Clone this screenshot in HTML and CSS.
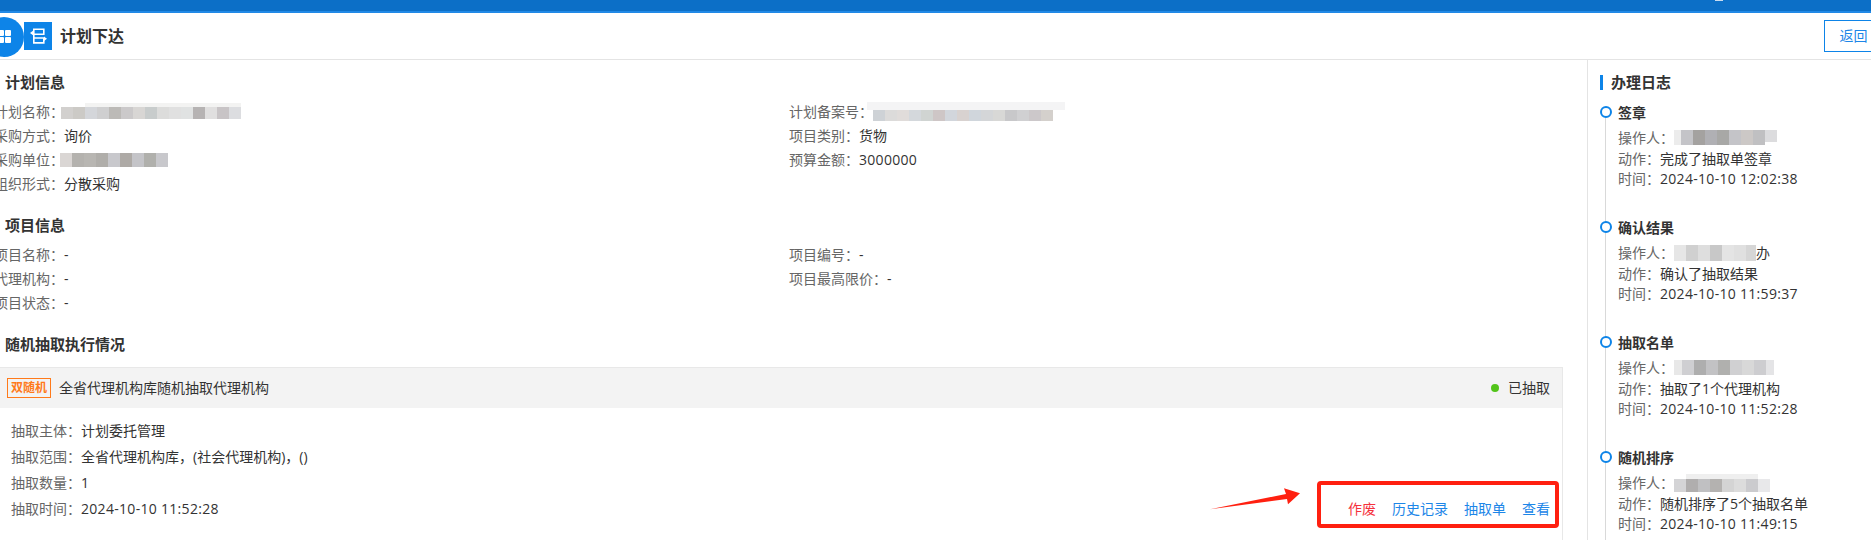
FILE: index.html
```html
<!DOCTYPE html>
<html lang="zh-CN">
<head>
<meta charset="utf-8">
<title>计划下达</title>
<link rel="stylesheet" href="styles.css">
</head>
<body>
<div class="topbar"><span class="top-dot"></span></div>
<header class="pagehead">
  <div class="head-left">
    <span class="apps"><i></i><i></i><i></i><i></i></span>
    <span class="doc-icon">
      <svg width="28" height="28" viewBox="0 0 28 28" fill="none" stroke="#fff" stroke-width="1.6">
        <path d="M9.8 7.3h10v4.9h-10zM9.8 16h10v4.9h-10zM9.8 12.2V16"/>
        <path d="M9 8.8 6 11l3 2.2zM20 14.5l3 2.2-3 2.2z" fill="#fff" stroke="none"/>
      </svg>
    </span>
    <h1 class="page-title">计划下达</h1>
  </div>
  <button class="back-btn">返回</button>
</header>

<main class="layout">
  <section class="content">
    <h2 class="sec-title">计划信息</h2>
    <div class="info-grid">
      <div class="row"><span class="lab">计划名称：</span>
        <svg class="mosaic m-name" width="180" height="18" shape-rendering="crispEdges">
          <g transform="translate(0,4)"><rect width="12" height="12" fill="#d2d0ce"/><rect x="12" width="12" height="12" fill="#cccac6"/><rect x="24" width="12" height="12" fill="#d4d6da"/><rect x="36" width="12" height="12" fill="#cfcfd0"/><rect x="48" width="12" height="12" fill="#bcbab7"/><rect x="60" width="12" height="12" fill="#cbc9ca"/><rect x="72" width="12" height="12" fill="#d8d6d4"/><rect x="84" width="12" height="12" fill="#c8cccc"/><rect x="96" width="12" height="12" fill="#dcdcdb"/><rect x="108" width="12" height="12" fill="#e0e0e0"/><rect x="120" width="12" height="12" fill="#e0e2e2"/><rect x="132" width="12" height="12" fill="#b6b3b3"/><rect x="144" width="12" height="12" fill="#e0dfdf"/><rect x="156" width="12" height="12" fill="#c8c4c6"/><rect x="168" width="12" height="12" fill="#dcdde0"/></g>
          <rect x="24" width="156" height="4" fill="#f3f3f2"/>
        </svg>
      </div>
      <div class="row"><span class="lab">计划备案号：</span>
        <svg class="mosaic m-rec" width="198" height="20" shape-rendering="crispEdges">
          <rect width="198" height="8" fill="#f4f4f5"/>
          <g transform="translate(6,8)"><rect width="12" height="11" fill="#ced2d6"/><rect x="12" width="12" height="11" fill="#dcdbda"/><rect x="24" width="12" height="11" fill="#e0dcda"/><rect x="36" width="12" height="11" fill="#d4d8dc"/><rect x="48" width="12" height="11" fill="#d0d4d2"/><rect x="60" width="12" height="11" fill="#cec6c6"/><rect x="72" width="12" height="11" fill="#d2d6dc"/><rect x="84" width="12" height="11" fill="#d8d2d0"/><rect x="96" width="12" height="11" fill="#d0d6dc"/><rect x="108" width="12" height="11" fill="#d4d6d8"/><rect x="120" width="12" height="11" fill="#d8d8d6"/><rect x="132" width="12" height="11" fill="#c8c8ca"/><rect x="144" width="12" height="11" fill="#d0d0d2"/><rect x="156" width="12" height="11" fill="#ccc8ca"/><rect x="168" width="12" height="11" fill="#d4d0cc"/></g>
        </svg>
      </div>
      <div class="row"><span class="lab">采购方式：</span><span class="val">询价</span></div>
      <div class="row"><span class="lab">项目类别：</span><span class="val">货物</span></div>
      <div class="row"><span class="lab">采购单位：</span>
        <svg class="mosaic m-unit" width="116" height="14" shape-rendering="crispEdges">
          <rect width="12" height="14" fill="#dad6d4"/><rect x="12" width="12" height="14" fill="#b4b2ae"/><rect x="24" width="12" height="14" fill="#b8b6b2"/><rect x="36" width="12" height="14" fill="#b0aeaa"/><rect x="48" width="12" height="14" fill="#c8c8cc"/><rect x="60" width="12" height="14" fill="#aeaaa6"/><rect x="72" width="12" height="14" fill="#c4c4c8"/><rect x="84" width="12" height="14" fill="#b0b0ac"/><rect x="96" width="12" height="14" fill="#c8c8cc"/>
        </svg>
      </div>
      <div class="row"><span class="lab">预算金额：</span><span class="val date">3000000</span></div>
      <div class="row"><span class="lab">组织形式：</span><span class="val">分散采购</span></div>
    </div>

    <h2 class="sec-title sec-gap">项目信息</h2>
    <div class="info-grid">
      <div class="row"><span class="lab">项目名称：</span><span class="val">-</span></div>
      <div class="row"><span class="lab">项目编号：</span><span class="val">-</span></div>
      <div class="row"><span class="lab">代理机构：</span><span class="val">-</span></div>
      <div class="row"><span class="lab">项目最高限价：</span><span class="val">-</span></div>
      <div class="row"><span class="lab">项目状态：</span><span class="val">-</span></div>
    </div>

    <h2 class="sec-title sec-gap">随机抽取执行情况</h2>
    <article class="card">
      <div class="card-head">
        <div class="card-name"><span class="tag">双随机</span><span class="val">全省代理机构库随机抽取代理机构</span></div>
        <div class="status"><i class="dot"></i><span class="val">已抽取</span></div>
      </div>
      <div class="card-body">
        <div class="facts">
          <div class="fact"><span class="lab">抽取主体：</span><span class="val">计划委托管理</span></div>
          <div class="fact"><span class="lab">抽取范围：</span><span class="val">全省代理机构库，(社会代理机构)，()</span></div>
          <div class="fact"><span class="lab">抽取数量：</span><span class="val">1</span></div>
          <div class="fact"><span class="lab">抽取时间：</span><span class="val date">2024-10-10 11:52:28</span></div>
        </div>
        <div class="actions">
          <a class="link danger">作废</a>
          <a class="link">历史记录</a>
          <a class="link">抽取单</a>
          <a class="link">查看</a>
        </div>
      </div>
      <div class="mark-box"></div>
      <svg class="mark-arrow" width="94" height="24" viewBox="0 0 94 24">
        <path d="M1 22.3 77 7 75 1.3 91 6.3 79 17.3 78 12Z" fill="#ff2010"/>
      </svg>
    </article>
  </section>

  <aside class="log">
    <h2 class="log-title">办理日志</h2>
    <ol class="timeline">
      <li class="item">
        <h3 class="item-title">签章</h3>
        <div class="line"><span class="lab">操作人：</span>
          <svg class="mosaic" width="103" height="16" shape-rendering="crispEdges"><rect width="7" height="15" fill="#ececec"/><rect x="7" width="12" height="15" fill="#c4c4c8"/><rect x="19" width="12" height="15" fill="#a4a2a0"/><rect x="31" width="12" height="15" fill="#b0b0b4"/><rect x="43" width="12" height="15" fill="#a8a8a6"/><rect x="55" width="12" height="15" fill="#c4c4c8"/><rect x="67" width="12" height="15" fill="#ccc8c6"/><rect x="79" width="12" height="15" fill="#c0c0c2"/><rect x="91" width="12" height="12" fill="#dcdcde"/></svg>
        </div>
        <div class="line"><span class="lab">动作：</span><span class="val">完成了抽取单签章</span></div>
        <div class="line"><span class="lab">时间：</span><span class="val date">2024-10-10 12:02:38</span></div>
      </li>
      <li class="item">
        <h3 class="item-title">确认结果</h3>
        <div class="line"><span class="lab">操作人：</span>
          <svg class="mosaic m-op2" width="82" height="16" shape-rendering="crispEdges"><rect width="12" height="16" fill="#e6e6e6"/><rect x="12" width="12" height="16" fill="#d0d0d0"/><rect x="24" width="12" height="16" fill="#dedede"/><rect x="36" width="12" height="16" fill="#c8c8c8"/><rect x="48" width="12" height="16" fill="#e4e4e4"/><rect x="60" width="12" height="16" fill="#e0e0e0"/><rect x="72" width="10" height="16" fill="#d6d6d6"/></svg><span class="val">办</span>
        </div>
        <div class="line"><span class="lab">动作：</span><span class="val">确认了抽取结果</span></div>
        <div class="line"><span class="lab">时间：</span><span class="val date">2024-10-10 11:59:37</span></div>
      </li>
      <li class="item">
        <h3 class="item-title">抽取名单</h3>
        <div class="line"><span class="lab">操作人：</span>
          <svg class="mosaic" width="100" height="16" shape-rendering="crispEdges"><rect width="8" height="15" fill="#e8e8e8"/><rect x="8" width="12" height="15" fill="#cfcfd2"/><rect x="20" width="12" height="15" fill="#aeaeae"/><rect x="32" width="12" height="15" fill="#c2c2c4"/><rect x="44" width="12" height="15" fill="#b0b0ae"/><rect x="56" width="12" height="15" fill="#d0d0d2"/><rect x="68" width="12" height="15" fill="#d8d8d8"/><rect x="80" width="12" height="15" fill="#cdcdd0"/><rect x="92" width="8" height="15" fill="#e4e4e6"/></svg>
        </div>
        <div class="line"><span class="lab">动作：</span><span class="val">抽取了1个代理机构</span></div>
        <div class="line"><span class="lab">时间：</span><span class="val date">2024-10-10 11:52:28</span></div>
      </li>
      <li class="item">
        <h3 class="item-title">随机排序</h3>
        <div class="line"><span class="lab">操作人：</span>
          <svg class="mosaic" width="96" height="19" shape-rendering="crispEdges"><rect x="12" width="72" height="6" fill="#efefef"/><g transform="translate(0,5)"><rect width="12" height="13" fill="#d4d4d6"/><rect x="12" width="12" height="13" fill="#b0aeae"/><rect x="24" width="12" height="13" fill="#c0c0c2"/><rect x="36" width="12" height="13" fill="#b4b2b0"/><rect x="48" width="12" height="13" fill="#d4d4d4"/><rect x="60" width="12" height="13" fill="#dcdcdc"/><rect x="72" width="12" height="13" fill="#cbcbce"/><rect x="84" width="12" height="13" fill="#e8e8ea"/></g></svg>
        </div>
        <div class="line"><span class="lab">动作：</span><span class="val">随机排序了5个抽取名单</span></div>
        <div class="line"><span class="lab">时间：</span><span class="val date">2024-10-10 11:49:15</span></div>
      </li>
    </ol>
  </aside>
</main>
</body>
</html>
```
FILE: styles.css
```css
*, *::before, *::after { box-sizing: border-box; }
html, body { margin: 0; padding: 0; height: 540px; overflow: hidden; background: #fff; }
body { font: 14px/20px "Open Sans", "Noto Sans CJK SC", "Liberation Sans", sans-serif; color: #333; }
h1, h2, h3, ol { margin: 0; padding: 0; list-style: none; }

.topbar { height: 13px; background: #0c6fc7; border-bottom: 2px solid #2189e6; display: flex; justify-content: flex-end; padding-right: 148px; }
.top-dot { width: 8px; height: 1px; background: #c9dcf0; }

.pagehead { height: 47px; border-bottom: 1px solid #e4e4e4; display: flex; align-items: center; justify-content: space-between; margin-right: -12px; }
.head-left { display: flex; align-items: center; margin-left: -16px; }
.apps { width: 40px; height: 40px; border-radius: 50%; background: #0d84e8; display: grid; grid-template-columns: 6px 6px; grid-auto-rows: 6px; gap: 1px; place-content: center; margin-top: 1px; }
.apps i { background: #fff; border-radius: 1px; }
.doc-icon { width: 28px; height: 28px; background: #0d84e8; display: block; margin-right: 8px; }
.doc-icon svg { display: block; }
.page-title { font-size: 16px; font-weight: 700; color: #333; line-height: 24px; }
.back-btn { width: 59px; height: 32px; border: 1px solid #0d84e8; background: #fff; color: #1c86e8; font: inherit; font-size: 14px; padding: 0; margin-top: -1px; }

.layout { display: flex; height: 480px; overflow: hidden; }
.content { width: 1588px; flex: none; border-right: 1px solid #e4e4e4; }

.sec-title { font-size: 15px; font-weight: 700; color: #333; line-height: 22px; padding-left: 5px; margin-top: 11px; }
.sec-gap { margin-top: 18px; }

.info-grid { display: grid; grid-template-columns: 795px 1fr; grid-auto-rows: 24px; margin: 7px 0 0 -6px; }
.row { display: flex; align-items: center; height: 24px; }
.lab { color: #666; white-space: nowrap; }
.val { color: #333; white-space: nowrap; }
.date { letter-spacing: 0.3px; }
.mosaic { display: block; flex: none; }
.m-name { margin-left: -3px; }
.m-rec { margin-left: -6px; }
.m-unit { margin-left: -4px; }

.card { position: relative; margin: 12px 24px 0 -10px; border: 1px solid #e8e8e8; border-bottom: 0; height: 300px; }
.card-head { height: 40px; background: #f3f3f3; display: flex; align-items: center; justify-content: space-between; padding: 0 12px 0 16px; }
.card-name { display: flex; align-items: center; gap: 8px; }
.tag { height: 20px; width: 44px; border: 1px solid #ff7a1a; color: #ff7a1a; font-size: 12px; line-height: 18px; text-align: center; font-weight: 700; }
.status { display: flex; align-items: center; gap: 9px; }
.dot { width: 8px; height: 8px; border-radius: 50%; background: #52c41a; }
.card-body { display: flex; justify-content: space-between; align-items: flex-start; padding: 10px 12px 0 20px; }
.fact { height: 26px; display: flex; align-items: center; }
.facts { flex: none; }
.actions { display: flex; gap: 16px; margin-top: 81px; }
.link { color: #1c86e8; line-height: 20px; }
.link.danger { color: #f5323c; }
.mark-box { position: absolute; left: 1326px; top: 113px; width: 242px; height: 47px; border: 4px solid #ff2010; border-radius: 4px; }
.mark-arrow { position: absolute; left: 1218px; top: 119px; }

.log { flex: 1; padding: 15px 0 0 12px; min-width: 0; }
.log-title { font-size: 15px; font-weight: 700; line-height: 15px; border-left: 3px solid #0d84e8; padding-left: 8px; color: #333; }
.timeline { margin-top: 16px; }
.item { position: relative; height: 115px; padding-left: 18px; }
.item::before { content: ""; position: absolute; left: 0; top: 0; width: 12px; height: 12px; border: 2.5px solid #0d84e8; border-radius: 50%; background: #fff; z-index: 1; }
.item::after { content: ""; position: absolute; left: 5px; top: 10px; bottom: -6px; width: 1px; background: #d9d9d9; }
.item-title { font-size: 14px; font-weight: 700; line-height: 13px; color: #333; }
.line { display: flex; align-items: center; height: 20.5px; }
.item-title + .line { margin-top: 9px; }
```
